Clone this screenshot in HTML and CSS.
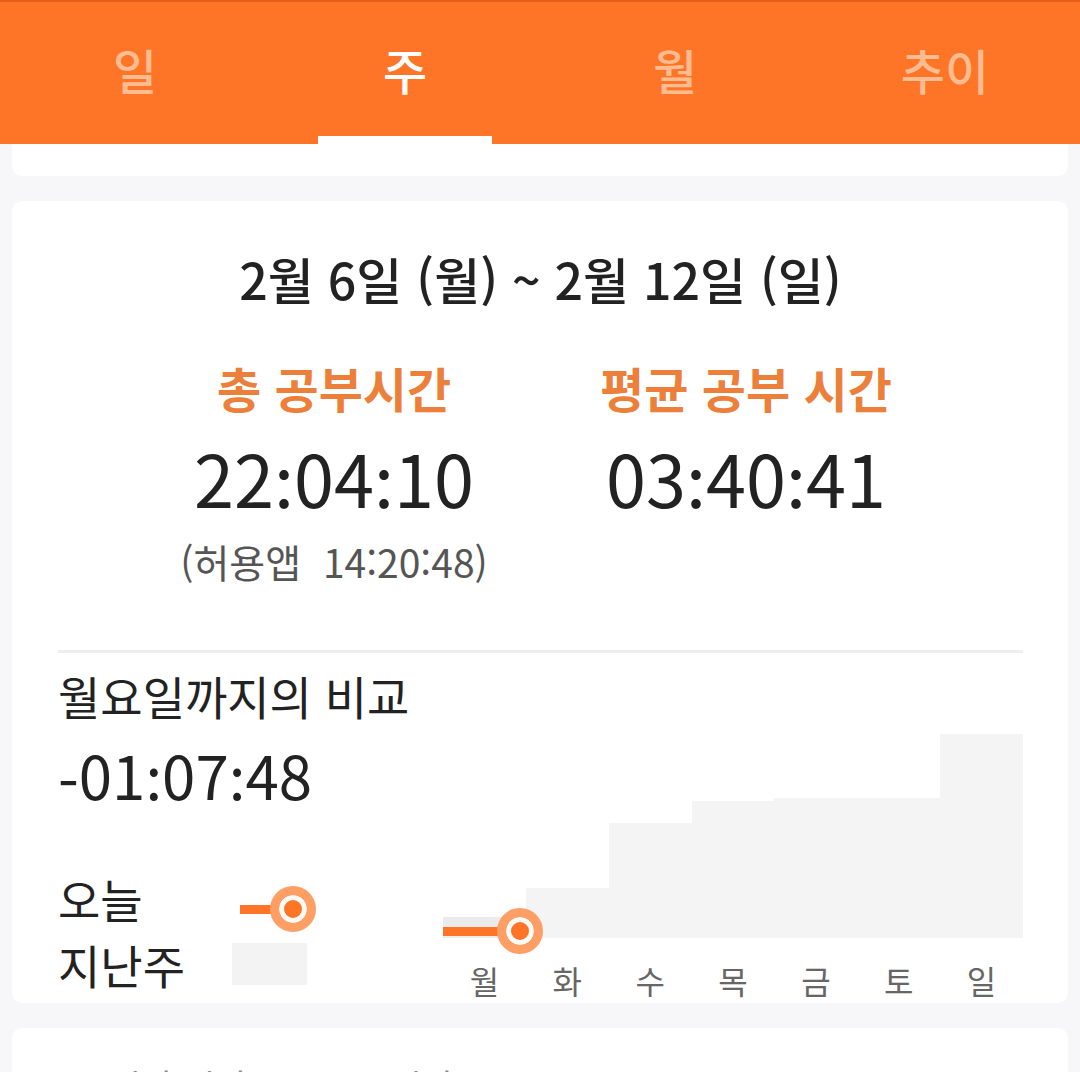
FILE: index.html
```html
<!DOCTYPE html>
<html lang="ko">
<head>
<meta charset="utf-8">
<link rel="stylesheet" href="styles.css">
</head>
<body>
<header class="tabs">
  <div class="tab">일</div>
  <div class="tab active">주<span class="indicator"></span></div>
  <div class="tab">월</div>
  <div class="tab">추이</div>
</header>
<div class="stub"></div>
<main class="card">
  <div class="range">2월 6일 (월) ~ 2월 12일 (일)</div>
  <div class="stats">
    <div class="stat">
      <div class="stat-label">총 공부시간</div>
      <div class="stat-value" lang="ja">22:04:10</div>
      <div class="stat-sub">(허용앱&nbsp;&nbsp;14:20:48)</div>
    </div>
    <div class="stat">
      <div class="stat-label">평균 공부 시간</div>
      <div class="stat-value" lang="ja">03:40:41</div>
    </div>
  </div>
  <div class="divider"></div>
  <div class="compare">
    <div class="compare-left">
      <div class="compare-title">월요일까지의 비교</div>
      <div class="compare-value" lang="ja">-01:07:48</div>
      <div class="legend">
        <div class="legend-row">
          <span class="legend-label">오늘</span>
          <span class="legend-today"><span class="stem"></span><span class="dot"></span></span>
        </div>
        <div class="legend-row">
          <span class="legend-label">지난주</span>
          <span class="legend-last"></span>
        </div>
      </div>
    </div>
    <div class="chart">
      <div class="bars">
        <div class="bar mon" style="height:21px"></div>
        <div class="bar" style="height:50px"></div>
        <div class="bar" style="height:115px"></div>
        <div class="bar" style="height:137px"></div>
        <div class="bar" style="height:140px"></div>
        <div class="bar" style="height:140px"></div>
        <div class="bar" style="height:204px"></div>
        <div class="today-marker"><span class="stem"></span><span class="dot"></span></div>
      </div>
      <div class="days">
        <span>월</span><span>화</span><span>수</span><span>목</span><span>금</span><span>토</span><span>일</span>
      </div>
    </div>
  </div>
</main>
<section class="card next">
  <span>시작 시간</span>
  <span>종료 시간</span>
</section>
</body>
</html>
```
FILE: styles.css
```css
* { box-sizing: border-box; }
html, body {
  margin: 0;
  padding: 0;
}
body {
  background: #f7f7f9;
  font-family: "Noto Sans CJK KR", "Noto Sans", sans-serif;
  color: #222;
  width: 1080px;
  overflow: hidden;
}
.tabs {
  display: flex;
  height: 144px;
  background: #ff7527;
  border-top: 2px solid #e2601b;
}
.tab {
  position: relative;
  flex: 1;
  display: flex;
  align-items: center;
  justify-content: center;
  padding-bottom: 8px;
  font-size: 48px;
  font-weight: 500;
  line-height: 1;
  color: #ffbc90;
}
.tab.active {
  color: #fff;
}
.indicator {
  position: absolute;
  left: 48px;
  right: 48px;
  bottom: 0;
  height: 8px;
  background: #fff;
}
.stub {
  height: 32px;
  margin: 0 12px;
  background: #fff;
  border-radius: 0 0 10px 10px;
}
.card {
  margin: 25px 12px 0;
  background: #fff;
  border-radius: 10px;
}
main.card {
  display: flex;
  flex-direction: column;
  padding: 45px 45px 0 46px;
  height: 802px;
}
.range {
  text-align: center;
  font-size: 50px;
  font-weight: 500;
  line-height: 64px;
}
.stats {
  display: grid;
  grid-template-columns: 412px 412px;
  justify-content: center;
  margin-top: 47px;
  margin-left: -46px;
  margin-right: -45px;
}
.stat {
  text-align: center;
}
.stat-label {
  font-size: 48px;
  font-weight: 700;
  color: #ec7f3a;
  line-height: 60px;
}
.stat-value {
  font-family: "Noto Sans CJK JP", "Noto Sans", sans-serif;
  font-size: 72px;
  line-height: 94px;
  margin-top: 13px;
}
.stat-sub {
  font-size: 39px;
  color: #555;
  line-height: 66px;
  margin-top: 4px;
}
.divider {
  flex: none;
  height: 3px;
  background: #eeeeee;
  margin-top: 56px;
}
.compare {
  flex: 1;
  display: grid;
  grid-template-columns: 385px 580px;
}
.compare-title {
  font-size: 46px;
  line-height: 60px;
  margin-top: 12px;
}
.compare-value {
  font-family: "Noto Sans CJK JP", "Noto Sans", sans-serif;
  font-size: 60px;
  line-height: 82px;
  margin-top: 8px;
}
.legend {
  margin-top: 50px;
}
.legend-row {
  display: flex;
  align-items: center;
  height: 66px;
}
.legend-label {
  width: 174px;
  font-size: 46px;
  line-height: 66px;
}
.legend-today {
  display: flex;
  align-items: center;
  margin-left: 8px;
  margin-top: 22px;
}
.stem {
  display: block;
  width: 36px;
  height: 9px;
  background: #ff7527;
}
.dot {
  display: block;
  width: 46px;
  height: 46px;
  margin-left: -6px;
  border-radius: 50%;
  background: #ff7527;
  border: 9px solid #ff9f66;
  box-shadow: inset 0 0 0 5px #fffaf5;
}
.legend-last {
  display: block;
  width: 75px;
  height: 42px;
  background: #f3f3f3;
}
.chart {
  align-self: end;
}
.bars {
  position: relative;
  display: flex;
  align-items: flex-end;
  height: 210px;
}
.bar {
  flex: 1;
  background: #f4f4f4;
}
.bar.mon {
  background: #ebebeb;
}
.today-marker {
  position: absolute;
  left: 0;
  bottom: 1px;
  display: flex;
  align-items: center;
  transform: translateY(17px);
}
.today-marker .stem {
  width: 60px;
}
.days {
  display: flex;
  height: 65px;
  align-items: flex-start;
  padding-top: 26px;
}
.days span {
  flex: 1;
  text-align: center;
  font-size: 32px;
  color: #666;
  line-height: 32px;
}
.next {
  height: 80px;
  padding: 27px 0 0 97px;
  display: flex;
  gap: 68px;
  font-size: 35px;
  color: #8a8a8a;
  line-height: 60px;
}
```
